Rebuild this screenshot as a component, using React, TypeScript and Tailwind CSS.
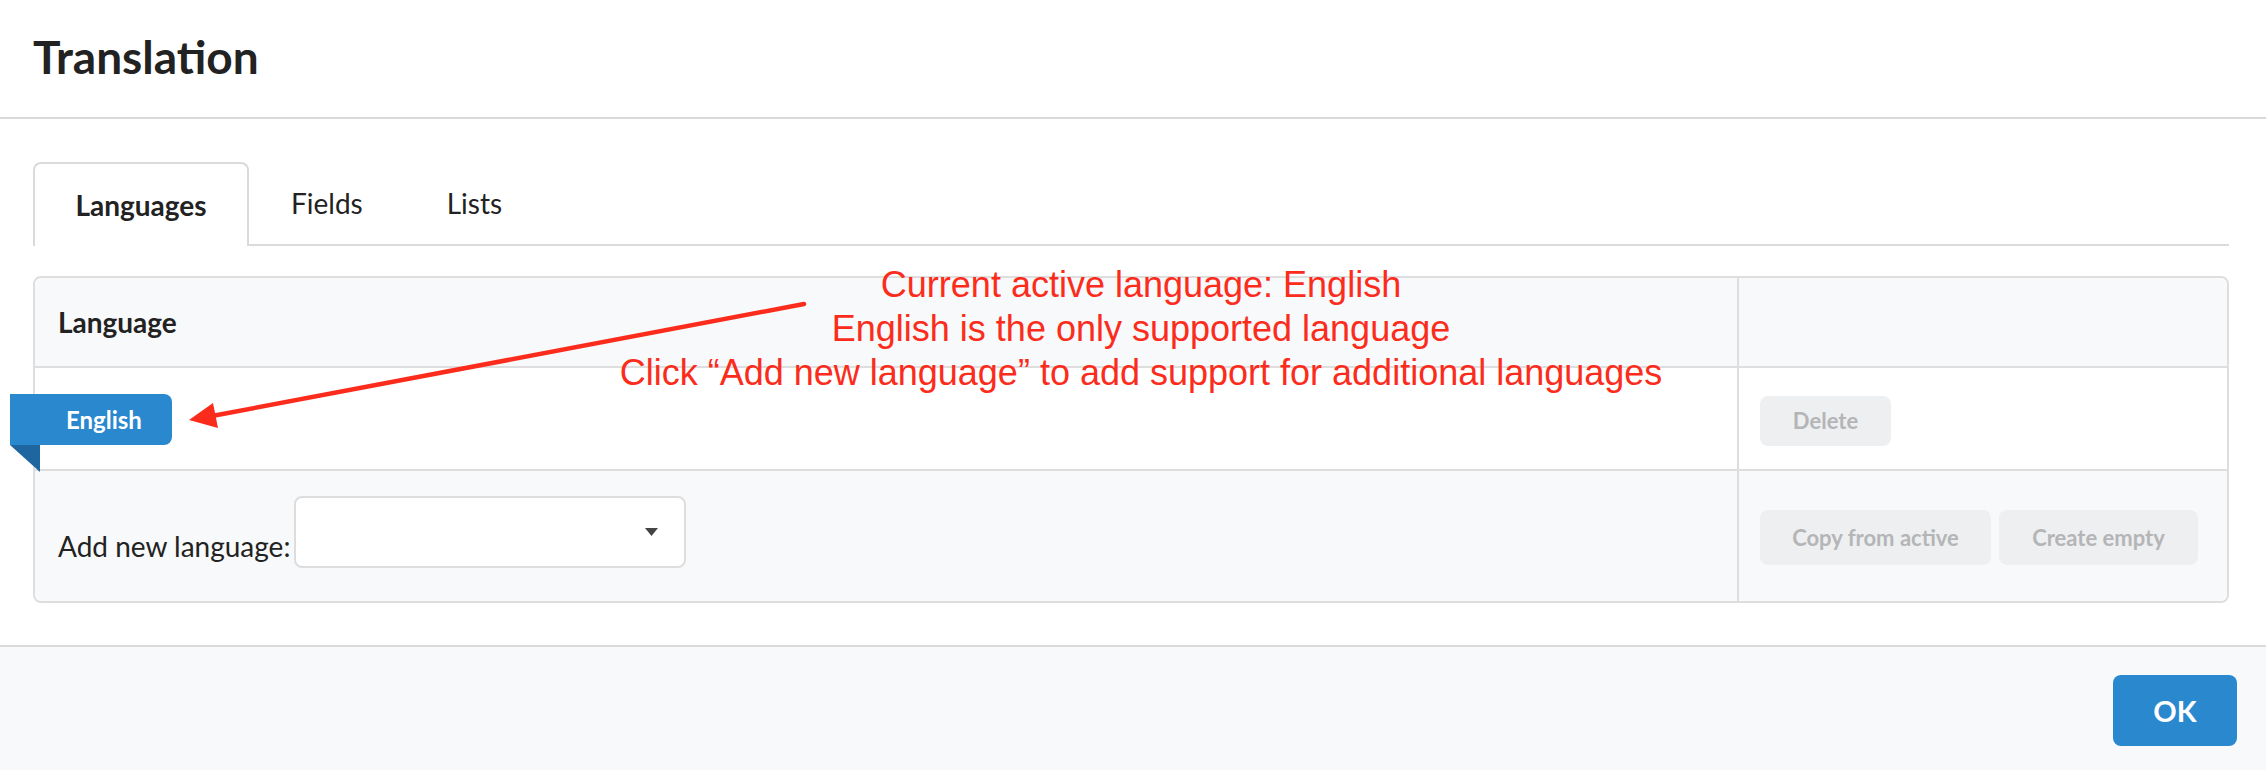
const tabs = ["Languages", "Fields", "Lists"];

function Arrow() {
  // annotation arrow drawn over the table
  return (
    <svg
      className="pointer-events-none absolute left-0 top-0"
      width={2266}
      height={770}
      viewBox="0 0 2266 770"
    >
      <line x1={804} y1={304} x2={212} y2={416} stroke="#fb2c1c" strokeWidth={4.5} strokeLinecap="round" />
      <polygon points="189,420 213,403 218,428" fill="#fb2c1c" />
    </svg>
  );
}

function GreyButton({ label, className = "" }: { label: string; className?: string }) {
  return (
    <button
      disabled
      className={`rounded-lg bg-[#eeeff0] text-[22px] font-bold text-[#b4b5b7] ${className}`}
    >
      {label}
    </button>
  );
}

export default function App() {
  return (
    <div className="relative flex h-[770px] w-[2266px] flex-col bg-white font-['Lato','Open_Sans',sans-serif] text-[#222]">
      <header className="flex h-[119px] shrink-0 items-center border-b-2 border-[#dadada] px-[33px] pb-[4px]">
        <h1 className="text-[46px] font-bold text-[#222]">Translation</h1>
      </header>

      <main className="shrink-0 pl-[33px] pr-[37px] pb-[42px] pt-[43px]">
        <div className="flex h-[84px] items-stretch border-b-2 border-[#dadada]">
          {tabs.map((t, i) =>
            i === 0 ? (
              <div
                key={t}
                className="-mb-[2px] flex w-[216px] items-center justify-center rounded-t-lg border-2 border-b-0 border-[#dadada] bg-white text-[28px] font-bold"
              >
                {t}
              </div>
            ) : (
              <div key={t} className="flex items-center px-[42px] text-[28px] text-[#222]">
                {t}
              </div>
            )
          )}
        </div>

        <div className="mt-[30px] rounded-lg border-2 border-[#dedede]">
          {/* header row */}
          <div className="flex h-[90px] rounded-t-lg border-b-2 border-[#dedede] bg-[#f8f9fa]">
            <div className="flex w-[1702px] items-center pl-[23px] text-[28px] font-bold">Language</div>
            <div className="flex-1 border-l-2 border-[#dedede]" />
          </div>

          {/* active language row */}
          <div className="flex h-[103px] border-b-2 border-[#dedede] bg-white">
            <div className="flex w-[1702px] items-center">
              <div className="relative -ml-[25px] mt-[2px]">
                <div className="flex h-[51px] w-[162px] items-center rounded-r-lg bg-[#2a88cf] pl-[56px] text-[24px] font-bold text-white">
                  English
                </div>
                <div className="absolute left-0 top-[51px] h-0 w-0 border-l-[30px] border-t-[27px] border-l-transparent border-t-[#1f66a0]" />
              </div>
            </div>
            <div className="flex flex-1 items-center border-l-2 border-[#dedede] pl-[21px] pt-[4px]">
              <GreyButton label="Delete" className="h-[50px] w-[131px]" />
            </div>
          </div>

          {/* add new language row */}
          <div className="flex h-[130px] rounded-b-lg bg-[#f8f9fa]">
            <div className="flex w-[1702px] items-end pb-[33px] pl-[23px]">
              <span className="pb-[1px] text-[28px]">Add new language:</span>
              <div className="ml-[4px] flex h-[72px] w-[392px] items-center justify-end rounded-lg border-2 border-[#dddddd] bg-white pr-[26px]">
                <svg width="13" height="8" viewBox="0 0 13 8">
                  <polygon points="0,0 13,0 6.5,8" fill="#444" />
                </svg>
              </div>
            </div>
            <div className="flex flex-1 items-center gap-[8px] border-l-2 border-[#dedede] pl-[21px] pt-[2px]">
              <GreyButton label="Copy from active" className="h-[55px] w-[231px]" />
              <GreyButton label="Create empty" className="h-[55px] w-[199px]" />
            </div>
          </div>
        </div>
      </main>

      <footer className="flex flex-1 items-start justify-end border-t-2 border-[#dadada] bg-[#f8f9fa] pr-[29px] pt-[28px]">
        <button className="h-[71px] w-[124px] rounded-lg bg-[#2a88cf] text-[29px] font-bold text-white">OK</button>
      </footer>

      {/* annotation */}
      <div className="pointer-events-none absolute left-[541px] top-[263px] w-[1200px] text-center font-['Liberation_Sans',Arial,sans-serif] text-[36px] leading-[44px] text-[#fb2c1c]">
        <div>Current active language: English</div>
        <div>English is the only supported language</div>
        <div>Click “Add new language” to add support for additional languages</div>
      </div>
      <Arrow />
    </div>
  );
}
